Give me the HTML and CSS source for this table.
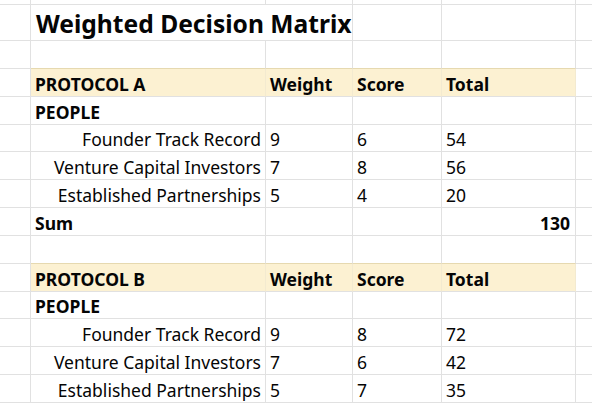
FILE: index.html
```html
<!DOCTYPE html>
<html>
<head>
<meta charset="utf-8">
<link rel="stylesheet" href="styles.css">
</head>
<body>
<div class="sheet">
  <div class="c"></div><div class="c"></div><div class="c"></div><div class="c"></div><div class="c"></div><div class="c"></div>

  <div class="c"></div><div class="c title span2">Weighted Decision Matrix</div><div class="c"></div><div class="c"></div><div class="c"></div>

  <div class="c"></div><div class="c tan"></div><div class="c tan"></div><div class="c tan"></div><div class="c tan"></div><div class="c"></div>

  <div class="c"></div><div class="c band b">PROTOCOL A</div><div class="c band b">Weight</div><div class="c band b">Score</div><div class="c band b">Total</div><div class="c"></div>

  <div class="c"></div><div class="c b">PEOPLE</div><div class="c"></div><div class="c"></div><div class="c"></div><div class="c"></div>

  <div class="c"></div><div class="c r">Founder Track Record</div><div class="c">9</div><div class="c">6</div><div class="c">54</div><div class="c"></div>

  <div class="c"></div><div class="c r">Venture Capital Investors</div><div class="c">7</div><div class="c">8</div><div class="c">56</div><div class="c"></div>

  <div class="c"></div><div class="c r">Established Partnerships</div><div class="c">5</div><div class="c">4</div><div class="c">20</div><div class="c"></div>

  <div class="c"></div><div class="c b">Sum</div><div class="c"></div><div class="c"></div><div class="c b r sum">130</div><div class="c"></div>

  <div class="c"></div><div class="c tan"></div><div class="c tan"></div><div class="c tan"></div><div class="c tan"></div><div class="c"></div>

  <div class="c"></div><div class="c band b">PROTOCOL B</div><div class="c band b">Weight</div><div class="c band b">Score</div><div class="c band b">Total</div><div class="c"></div>

  <div class="c"></div><div class="c b">PEOPLE</div><div class="c"></div><div class="c"></div><div class="c"></div><div class="c"></div>

  <div class="c"></div><div class="c r">Founder Track Record</div><div class="c">9</div><div class="c">8</div><div class="c">72</div><div class="c"></div>

  <div class="c"></div><div class="c r">Venture Capital Investors</div><div class="c">7</div><div class="c">6</div><div class="c">42</div><div class="c"></div>

  <div class="c"></div><div class="c r">Established Partnerships</div><div class="c">5</div><div class="c">7</div><div class="c">35</div><div class="c"></div>
</div>
</body>
</html>
```

FILE: styles.css
```css
html, body {
  margin: 0;
  padding: 0;
  background: #ffffff;
}

.sheet {
  display: grid;
  grid-template-columns: 31px 235px 87px 89px 134px 40px;
  grid-template-rows: 5px 36px repeat(13, 27.85px);
  font-family: "Noto Sans", "Open Sans", sans-serif;
  font-size: 17.5px;
  color: #050505;
  overflow: hidden;
  width: 592px;
  height: 403px;
}

.c {
  box-sizing: border-box;
  border-right: 1px solid #e1e1e1;
  border-bottom: 1px solid #e1e1e1;
  display: flex;
  align-items: flex-end;
  padding: 0 4px 2px 4px;
  line-height: 20px;
  white-space: nowrap;
  min-width: 0;
}

.span2 {
  grid-column: span 2;
}

.title {
  font-size: 24.6px;
  font-weight: 700;
  line-height: 28px;
  padding-left: 5px;
  padding-bottom: 2px;
}

.b {
  font-weight: 700;
}

.r {
  justify-content: flex-end;
}

.sum {
  padding-right: 5px;
}

.tan {
  border-bottom-color: #e6d9b0;
}

.band {
  background: #fcf1d2;
  border-right-color: #f3ead0;
}
```
